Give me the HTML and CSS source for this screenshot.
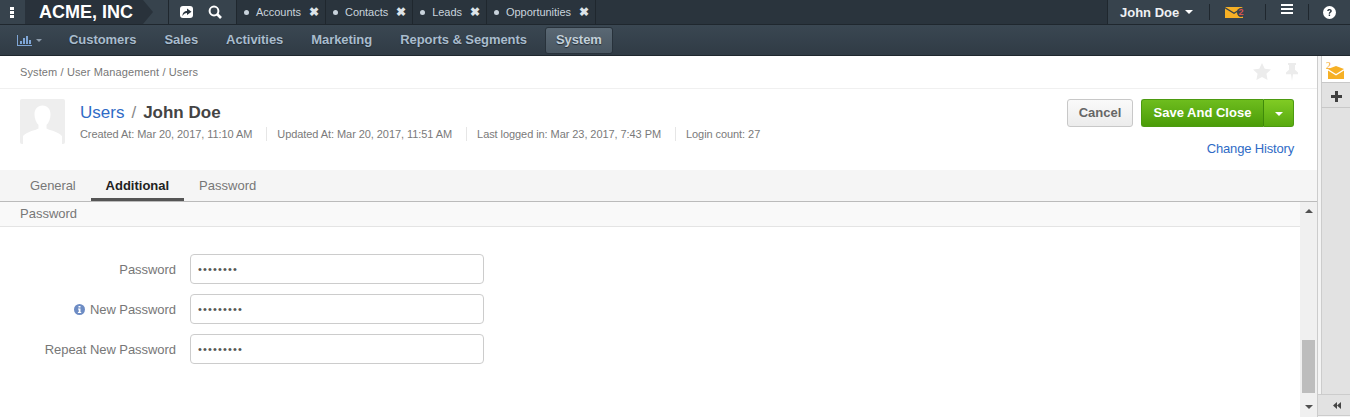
FILE: index.html
```html
<!DOCTYPE html>
<html lang="en">

<head>
    <meta charset="UTF-8">
    <title>Users - John Doe</title>
    <link rel="stylesheet" href="styles.css">
</head>

<body>
    <div class="topbar">
        <div class="top-left">
            <div class="menu-dots"><span></span><span></span><span></span></div>
            <div class="brand">ACME, INC</div>
            <div class="quick">
                <svg width="13" height="12" viewBox="0 0 13 12">
                    <rect width="13" height="12" rx="3" fill="#fff" />
                    <path d="M2.500 10C2.500 6.500 4.500 5 7 5V2.500L11.500 5.800 7 9V7C5 7 3.500 8 2.500 10Z" fill="#2b3640" />
                </svg>
                <svg width="14" height="14" viewBox="0 0 14 14">
                    <circle cx="6" cy="6" r="4.400" fill="none" stroke="#fff" stroke-width="2" />
                    <path d="M9 9l4 4" stroke="#fff" stroke-width="2.600" />
                </svg>
            </div>
        </div>
        <div class="pin-tab"><i></i>Accounts<b>&#10006;</b></div>
        <div class="pin-tab"><i></i>Contacts<b>&#10006;</b></div>
        <div class="pin-tab"><i></i>Leads<b>&#10006;</b></div>
        <div class="pin-tab"><i></i>Opportunities<b>&#10006;</b></div>
        <div class="top-right">
            <div class="user">John Doe<span class="caret"></span></div>
            <div class="top-item mail">
                <svg width="18" height="11" viewBox="0 0 18 11">
                    <path d="M0 0H18L9 5.500Z" fill="#f6b025" />
                    <path d="M0 1.500L9 7 18 1.500V11H0Z" fill="#f6b025" />
                </svg>
                <span class="mail-count">2</span>
            </div>
            <div class="top-item burger"><span></span><span></span><span></span></div>
            <div class="top-item help">
                <svg width="13" height="13" viewBox="0 0 13 13">
                    <circle cx="6.500" cy="6.500" r="6.500" fill="#fff" />
                    <path d="M4.200 5C4.300 3.600 5.300 3 6.500 3 7.900 3 8.800 3.800 8.800 4.900 8.800 6.400 7 6.400 7 7.800H5.700C5.700 5.800 7.300 5.800 7.300 4.900 7.300 4.400 7 4.200 6.500 4.200 6 4.200 5.700 4.500 5.600 5ZM5.700 8.600H7.100V10H5.700Z" fill="#2b3640" />
                </svg>
            </div>
        </div>
    </div>

    <nav class="mainnav">
        <div class="nav-chart">
            <svg width="15" height="11" viewBox="0 0 15 11">
                <path d="M0 0H1V10H15V11H0ZM3 6H5V9H3ZM6 3H8V9H6ZM9 1H11V9H9ZM12 5H14V9H12Z" fill="#7fa6d6" />
            </svg>
            <span class="caret small"></span>
        </div>
        <a class="nav-link">Customers</a>
        <a class="nav-link">Sales</a>
        <a class="nav-link">Activities</a>
        <a class="nav-link">Marketing</a>
        <a class="nav-link">Reports &amp; Segments</a>
        <a class="nav-link active">System</a>
    </nav>

    <div class="workspace">
        <main class="content">
            <div class="breadcrumbs">
                <span>System / User Management / Users</span>
                <div class="page-tools">
                    <svg width="18" height="17" viewBox="0 0 19 18">
                        <path d="M9.500 0L12.400 6 19 6.900 14.200 11.400 15.400 18 9.500 14.800 3.600 18 4.800 11.400 0 6.900 6.600 6Z" fill="#ececec" />
                    </svg>
                    <svg width="12" height="18" viewBox="1 0 12 19" preserveAspectRatio="none">
                        <path d="M3 0H11V2H10V7L13 10V12H8L7 19 6 12H1V10L4 7V2H3Z" fill="#ececec" />
                    </svg>
                </div>
            </div>

            <div class="page-head">
                <div class="avatar">
                    <svg width="45" height="45" viewBox="0 0 45 45">
                        <rect width="45" height="45" rx="2" fill="#eeeeee" />
                        <path d="M22.500 6.500C27.500 6.500 30.500 10 30.500 15.500 30.500 20 28.500 24 26.500 26V29.500C30 31.500 38 32.500 42 37V45H3V37C7 32.500 15 31.500 18.500 29.500V26C16.500 24 14.500 20 14.500 15.500 14.500 10 17.500 6.500 22.500 6.500Z" fill="#fff" />
                    </svg>
                </div>
                <div class="head-info">
                    <h1 class="title"><a class="link">Users</a><span class="sep">/</span><b>John Doe</b></h1>
                    <ul class="meta">
                        <li>Created At: Mar 20, 2017, 11:10 AM</li>
                        <li>Updated At: Mar 20, 2017, 11:51 AM</li>
                        <li>Last logged in: Mar 23, 2017, 7:43 PM</li>
                        <li>Login count: 27</li>
                    </ul>
                </div>
                <div class="head-actions">
                    <div class="btn-row">
                        <button class="btn-cancel">Cancel</button>
                        <div class="btn-group">
                            <button class="btn-save">Save And Close</button>
                            <button class="btn-more"><span class="caret"></span></button>
                        </div>
                    </div>
                    <a class="link history">Change History</a>
                </div>
            </div>

            <div class="tabs">
                <a class="tab">General</a>
                <a class="tab active">Additional</a>
                <a class="tab">Password</a>
            </div>

            <div class="scroll-area">
                <div class="form-pane">
                    <div class="section-title">Password</div>
                    <form class="form">
                        <div class="form-row">
                            <label>Password</label>
                            <input type="password" value="12345678">
                        </div>
                        <div class="form-row">
                            <label>
                                <svg class="info" width="11" height="11" viewBox="0 0 11 11">
                                    <circle cx="5.500" cy="5.500" r="5.500" fill="#6d8cc4" />
                                    <path d="M4.500 2H6.500V3.600H4.500ZM4 4.600H6.500V8H7.200V9H3.900V8H4.700V5.600H4Z" fill="#fff" />
                                </svg>New Password</label>
                            <input type="password" value="123456789">
                        </div>
                        <div class="form-row">
                            <label>Repeat New Password</label>
                            <input type="password" value="123456789">
                        </div>
                    </form>
                </div>
                <div class="scrollbar">
                    <span class="arrow up"></span>
                    <div class="track"><div class="thumb"></div></div>
                    <span class="arrow down"></span>
                </div>
            </div>
        </main>

        <aside class="sidebar">
            <div class="side-item side-mail">
                <span class="side-count">2</span>
                <svg width="16" height="13" viewBox="0 0 16 13">
                    <path d="M0 3L8 0 16 3 8 8Z" fill="#f6b025" />
                    <path d="M0 4.500L8 9.500 16 4.500V13H0Z" fill="#f6b025" />
                </svg>
            </div>
            <div class="side-item side-plus">
                <svg width="11" height="11" viewBox="0 0 11 11">
                    <path d="M4 0H7V4H11V7H7V11H4V7H0V4H4Z" fill="#3f3f3f" />
                </svg>
            </div>
            <div class="side-fill"></div>
            <div class="side-collapse">
                <svg width="8" height="7" viewBox="0 0 8 7">
                    <path d="M4 0V7L0 3.500ZM8 0V7L4 3.500Z" fill="#444" />
                </svg>
            </div>
        </aside>
    </div>
</body>

</html>
```

FILE: styles.css
```css
* {
    box-sizing: border-box;
}

html,
body {
    height: 100%;
}

body {
    margin: 0;
    display: flex;
    flex-direction: column;
    overflow: hidden;
    background: #fff;
    color: #555;
    font-family: "Liberation Sans", Arial, sans-serif;
    font-size: 12px;
}

.link {
    color: #2f6bc6;
}

.caret {
    display: inline-block;
    margin-left: 6px;
    border-top: 4px solid #fff;
    border-left: 4px solid transparent;
    border-right: 4px solid transparent;
    vertical-align: 2px;
}

.caret.small {
    border-top-color: #8d9cab;
    border-top-width: 3px;
    border-left-width: 3.500px;
    border-right-width: 3.500px;
}

/* top bar */
.topbar {
    display: flex;
    align-items: stretch;
    height: 25px;
    background: #2a343d;
    border-bottom: 1px solid #1f272e;
    color: #fff;
}

.top-left {
    display: flex;
    align-items: stretch;
    background: #37434d;
}

.menu-dots {
    display: flex;
    flex-direction: column;
    justify-content: center;
    align-items: center;
    gap: 1px;
    width: 25px;
    padding-right: 1px;
}

.menu-dots span {
    width: 4px;
    height: 3px;
    background: #fff;
}

.brand {
    position: relative;
    width: 118px;
    margin-right: 25px;
    padding-left: 14px;
    background: #29323b;
    color: #fff;
    font-size: 18px;
    font-weight: bold;
    line-height: 24px;
}

.brand::after {
    content: "";
    position: absolute;
    left: 100%;
    top: 0;
    border-left: 10px solid #29323b;
    border-top: 12px solid transparent;
    border-bottom: 12px solid transparent;
}

.quick {
    display: flex;
    align-items: center;
    gap: 15px;
    width: 69px;
    padding-left: 11px;
    border-left: 1px solid #1f272e;
    border-right: 1px solid #1f272e;
}

.pin-tab {
    display: flex;
    align-items: center;
    padding: 0 6px 0 7px;
    border-right: 1px solid #1f272e;
    color: #c9d3dc;
    font-size: 11px;
    letter-spacing: -0.03px;
}

.pin-tab i {
    width: 5px;
    height: 5px;
    margin-right: 7px;
    border-radius: 50%;
    background: #c9d3dc;
}

.pin-tab b {
    margin-left: 8px;
    color: #dde3e8;
    font-size: 12px;
}

.top-right {
    display: flex;
    align-items: stretch;
    margin-left: auto;
    background: #37434d;
}

.user {
    display: flex;
    align-items: center;
    width: 102px;
    padding-left: 12px;
    border-left: 1px solid #1f272e;
    font-size: 13px;
    font-weight: bold;
    color: #eef1f4;
}

.top-item {
    display: flex;
    align-items: center;
    margin: 4px 0;
    border-left: 1px solid #1f272e;
}

.mail {
    position: relative;
    width: 56px;
    padding-left: 15px;
}

.mail-count {
    position: absolute;
    left: 27px;
    top: 4px;
    width: 8px;
    height: 9px;
    border-radius: 50%;
    background: #37434d;
    color: #d9534f;
    font-size: 9px;
    font-weight: bold;
    line-height: 9px;
    text-align: center;
}

.burger {
    flex-direction: column;
    gap: 2px;
    align-items: flex-start;
    justify-content: flex-start;
    width: 43px;
    padding-left: 15px;
}

.burger span {
    width: 12px;
    height: 2px;
    background: #fff;
}

.help {
    width: 42px;
    padding-left: 14px;
}

/* main menu */
.mainnav {
    display: flex;
    align-items: center;
    gap: 5px;
    height: 31px;
    padding-left: 17px;
    background: linear-gradient(#3a4752, #303b45);
    border-bottom: 1px solid #1f272e;
}

.nav-chart {
    display: flex;
    align-items: center;
    width: 38px;
}

.nav-chart .caret {
    margin-left: 4px;
    vertical-align: 0;
}

.nav-link {
    padding: 0 9px 1px 9px;
    color: #a9bccd;
    font-size: 13px;
    font-weight: bold;
    letter-spacing: -0.06px;
    line-height: 24px;
    margin-right: 5px;
    text-shadow: 0 1px 1px #222b33;
}

.nav-link.active {
    margin-left: -1px;
    padding: 0 10px 1px 10px;
    border: 1px solid #28323b;
    border-radius: 3px;
    background: linear-gradient(#5a6874, #4a5762);
    color: #c3d0da;
}

/* page */
.workspace {
    flex: 1;
    display: flex;
    min-height: 0;
}

.content {
    flex: 1;
    display: flex;
    flex-direction: column;
    min-width: 0;
}

.breadcrumbs {
    display: flex;
    justify-content: space-between;
    align-items: center;
    height: 33px;
    padding: 0 19px 0 20px;
    border-bottom: 1px solid #f0f0f0;
    font-size: 11px;
    letter-spacing: 0.12px;
    color: #777;
}

.page-tools {
    display: flex;
    gap: 15px;
    margin-bottom: 1px;
}

.page-head {
    display: flex;
    height: 81px;
    padding: 10px 23px 0 20px;
}

.avatar {
    height: 45px;
}

.head-info {
    margin-left: 15px;
}

.title {
    margin: 4px 0 0;
    font-size: 17px;
    font-weight: normal;
    line-height: 20px;
}

.title b {
    color: #444;
}

.sep {
    margin: 0 7px;
    color: #888;
}

.meta {
    display: flex;
    margin: 4px 0 0;
    padding: 0;
    list-style: none;
    font-size: 11px;
    letter-spacing: -0.07px;
    line-height: 14px;
    color: #7a7a7a;
}

.meta li {
    padding-right: 14px;
    margin-right: 10px;
    border-right: 1px solid #e6e6e6;
}

.meta li:last-child {
    border: 0;
}

.head-actions {
    margin-left: auto;
    display: flex;
    flex-direction: column;
    align-items: flex-end;
}

.btn-row {
    display: flex;
    gap: 8px;
}

.btn-row button {
    height: 28px;
    font-family: inherit;
    font-size: 13px;
    font-weight: bold;
    padding: 0 0 2px;
}

.btn-cancel {
    width: 66px;
    border: 1px solid #c8c8c8;
    border-radius: 3px;
    background: linear-gradient(#fafafa, #ececec);
    color: #666;
}

.btn-group {
    display: flex;
}

.btn-save {
    width: 123px;
    border: 1px solid #4c9a10;
    border-right: 1px solid #3f8a0a;
    border-radius: 3px 0 0 3px;
    background: linear-gradient(#6ebd1e, #4b9c08);
    color: #fff;
}

.btn-more {
    width: 30px;
    border: 1px solid #4c9a10;
    border-left: 0;
    border-radius: 0 3px 3px 0;
    background: linear-gradient(#80cb24, #58aa10);
}

.btn-more .caret {
    margin-left: 0;
    vertical-align: 1px;
}

.history {
    margin-top: 14px;
    font-size: 13px;
    letter-spacing: -0.17px;
    line-height: 16px;
}

.tabs {
    display: flex;
    height: 32px;
    padding-left: 15px;
    background: #f5f5f5;
    border-bottom: 1px solid #bbb;
}

.tab {
    height: 31px;
    padding: 0 15px;
    font-size: 13px;
    line-height: 31px;
    color: #777;
}

.tab:first-child {
    padding-right: 15px;
    letter-spacing: -0.1px;
}

.tab.active {
    border-bottom: 3px solid #555;
    color: #222;
    font-weight: bold;
}

.scroll-area {
    flex: 1;
    display: flex;
    min-height: 0;
}

.form-pane {
    flex: 1;
    min-width: 0;
}

.section-title {
    height: 25px;
    padding-left: 20px;
    background: #f9f9f9;
    border-bottom: 1px solid #e4e4e4;
    font-size: 13px;
    line-height: 24px;
    color: #777;
}

.form {
    display: flex;
    flex-direction: column;
    gap: 10px;
    padding-top: 27px;
}

.form-row {
    display: flex;
    align-items: center;
    gap: 14px;
}

.form-row label {
    width: 176px;
    padding-top: 1px;
    text-align: right;
    font-size: 13px;
    letter-spacing: -0.05px;
    color: #777;
}

.info {
    margin-right: 5px;
    vertical-align: -1px;
}

.form-row input {
    width: 294px;
    height: 30px;
    padding: 0 7px;
    border: 1px solid #ccc;
    border-radius: 4px;
    font-size: 11px;
    letter-spacing: 1.15px;
    font-family: inherit;
    color: #555;
}

.scrollbar {
    display: flex;
    flex-direction: column;
    align-items: center;
    width: 17px;
    background: #f0f0f0;
}

.arrow {
    flex: none;
    margin: 7px 0;
    border-left: 4px solid transparent;
    border-right: 4px solid transparent;
}

.arrow.up {
    border-bottom: 4px solid #505050;
}

.arrow.down {
    margin-bottom: 8px;
    border-top: 4px solid #505050;
}

.track {
    flex: 1;
    display: flex;
    align-items: flex-end;
    width: 100%;
    padding: 0 2px 5px;
}

.thumb {
    width: 13px;
    height: 53px;
    background: #bdbdbd;
}

.sidebar {
    display: flex;
    flex-direction: column;
    width: 33px;
    padding-left: 3px;
    background: #f4f4f4;
    border-left: 1px solid #ccc;
}

.side-item {
    display: flex;
    align-items: center;
    justify-content: center;
    border-left: 1px solid #ccc;
    border-bottom: 1px solid #c8c8c8;
    height: 27px;
}

.side-mail {
    position: relative;
    background: #fff;
    padding-top: 6px;
}

.side-count {
    position: absolute;
    left: 4px;
    top: 4px;
    color: #f6a623;
    font-family: "Liberation Serif", serif;
    font-size: 10px;
}

.side-plus {
    height: 25px;
    padding-top: 2px;
    background: #e2e2e2;
}

.side-fill {
    flex: 1;
    background: #e2e2e2;
    border-left: 1px solid #ccc;
}

.side-collapse {
    display: flex;
    align-items: center;
    justify-content: center;
    height: 22px;
    margin-left: -3px;
    padding-left: 5px;
    margin-bottom: 1px;
    background: #e2e2e2;
    border-top: 1px solid #ccc;
    border-bottom: 1px solid #ccc;
}
```
